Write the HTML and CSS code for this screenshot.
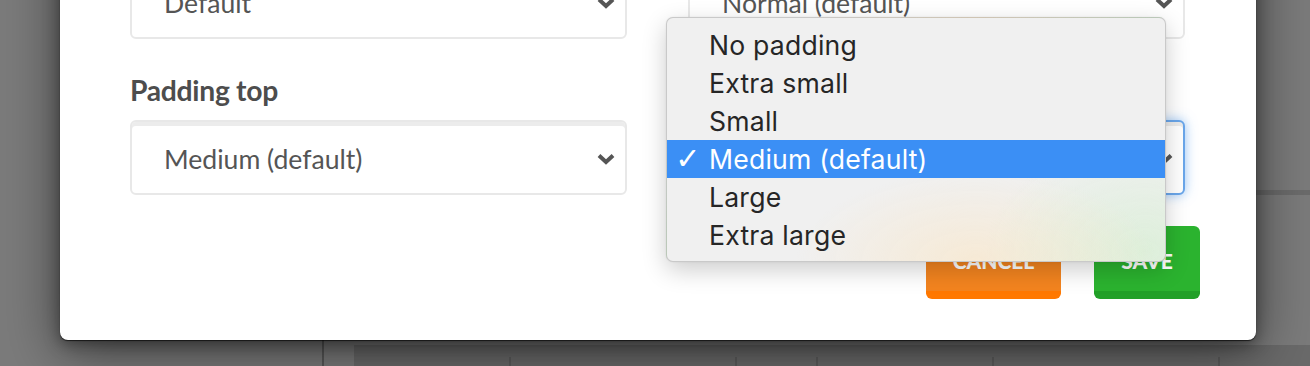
FILE: index.html
```html
<!DOCTYPE html>
<html lang="en">
<head>
<meta charset="utf-8">
<title>Padding settings</title>
<link rel="stylesheet" href="styles.css">
</head>
<body>
<div class="page">
  <div class="modal">
    <div class="form">
      <div class="col">
        <div class="select">
          <span class="value">Default</span>
          <svg class="chev" width="18" height="12" viewBox="0 0 18 12"><path d="M2 2.5 L9 9 L16 2.5" fill="none" stroke="#555" stroke-width="4" stroke-linecap="butt" stroke-linejoin="miter"/></svg>
        </div>
        <label class="label">Padding top</label>
        <div class="select">
          <span class="value">Medium (default)</span>
          <svg class="chev" width="18" height="12" viewBox="0 0 18 12"><path d="M2 2.5 L9 9 L16 2.5" fill="none" stroke="#555" stroke-width="4" stroke-linecap="butt" stroke-linejoin="miter"/></svg>
        </div>
      </div>
      <div class="col">
        <div class="select">
          <span class="value">Normal (default)</span>
          <svg class="chev" width="18" height="12" viewBox="0 0 18 12"><path d="M2 2.5 L9 9 L16 2.5" fill="none" stroke="#555" stroke-width="4" stroke-linecap="butt" stroke-linejoin="miter"/></svg>
        </div>
        <label class="label" aria-hidden="true"></label>
        <div class="select focus">
          <span class="value"></span>
          <svg class="chev" width="18" height="12" viewBox="0 0 18 12"><path d="M2 2.5 L9 9 L16 2.5" fill="none" stroke="#555" stroke-width="4" stroke-linecap="butt" stroke-linejoin="miter"/></svg>
        </div>
      </div>
    </div>
    <div class="actions">
      <button class="btn cancel">Cancel</button>
      <button class="btn save">Save</button>
    </div>
  </div>

  <ul class="menu">
    <li class="item"><span class="tick"></span>No padding</li>
    <li class="item"><span class="tick"></span>Extra small</li>
    <li class="item"><span class="tick"></span>Small</li>
    <li class="item active"><span class="tick">✓</span>Medium (default)</li>
    <li class="item"><span class="tick"></span>Large</li>
    <li class="item"><span class="tick"></span>Extra large</li>
  </ul>
</div>
</body>
</html>
```

FILE: styles.css
```css
html, body {
  margin: 0;
  padding: 0;
}

body {
  width: 1310px;
  height: 366px;
  overflow: hidden;
  font-family: Lato, "Open Sans", sans-serif;
}

.page {
  position: relative;
  width: 1310px;
  height: 366px;
  overflow: hidden;
  background-color: #7b7b7b;
  background-image:
    linear-gradient(#5c5c5c, #5c5c5c),
    linear-gradient(#5c5c5c, #5c5c5c),
    linear-gradient(#5c5c5c, #5c5c5c),
    linear-gradient(#5c5c5c, #5c5c5c),
    linear-gradient(#5c5c5c, #5c5c5c),
    linear-gradient(#585858, #585858),
    linear-gradient(#6a6a6a, #6a6a6a),
    linear-gradient(#6b6b6b, #6b6b6b);
  background-repeat: no-repeat;
  background-position:
    509px 357px,
    735px 357px,
    816px 357px,
    992px 357px,
    1218px 357px,
    322px 0,
    354px 345px,
    1256px 190px;
  background-size:
    2px 12px,
    2px 12px,
    2px 12px,
    2px 12px,
    2px 12px,
    2px 100%,
    100% 100%,
    100% 5px;
}

/* ---------- modal ---------- */
.modal {
  position: absolute;
  left: 60px;
  top: -100px;
  width: 1196px;
  box-sizing: border-box;
  padding: 64px 0 41px 0;
  background: #fff;
  border-radius: 8px;
  box-shadow:
    0 1px 1px rgba(0, 0, 0, 0.65),
    0 4px 16px rgba(0, 0, 0, 0.4),
    0 12px 56px rgba(0, 0, 0, 0.5);
}

.form {
  display: grid;
  grid-template-columns: 497px 497px;
  column-gap: 61px;
  padding: 0 71px 0 70px;
}

.col {
  display: flex;
  flex-direction: column;
}

.label {
  margin: 36px 0 15px 0;
  height: 30px;
  line-height: 30px;
  font-size: 28.3px;
  font-weight: 700;
  color: #4d4d4d;
  letter-spacing: -0.3px;
}

.select {
  height: 75px;
  box-sizing: border-box;
  display: flex;
  align-items: center;
  justify-content: space-between;
  padding: 0 10px 0 32px;
  border: 2px solid #e8e8e8;
  border-radius: 6px;
  box-shadow: inset 0 4px 0 #ececec;
  background: #fff;
}

.select.focus {
  border-color: #6aa6ea;
  box-shadow: inset 0 4px 0 #ececec, 0 0 12px rgba(70, 150, 240, 0.55);
}

.value {
  font-size: 26.6px;
  color: #555;
  padding-top: 2px;
}

.chev {
  display: block;
  margin-top: 2px;
}

/* ---------- buttons ---------- */
.actions {
  display: flex;
  justify-content: flex-end;
  gap: 33px;
  margin-top: 31px;
  padding-right: 56px;
}

.btn {
  height: 73px;
  box-sizing: border-box;
  border: none;
  border-radius: 6px;
  padding: 4px 0 0 0;
  font-family: Lato, sans-serif;
  font-weight: 900;
  font-size: 21px;
  color: #fff;
  text-transform: uppercase;
  letter-spacing: 0;
}

.cancel {
  width: 135px;
  background: #f3841f;
  border-bottom: 8px solid #ff7800;
}

.save {
  width: 106px;
  background: #2bb32f;
  border-bottom: 8px solid #22a028;
}

/* ---------- native-style dropdown menu ---------- */
.menu {
  position: absolute;
  left: 666px;
  top: 17px;
  width: 500px;
  height: 245px;
  box-sizing: border-box;
  margin: 0;
  padding: 8px 0 0 0;
  list-style: none;
  border-radius: 7px;
  border: 1px solid rgba(0, 0, 0, 0.16);
  background:
    radial-gradient(ellipse 180px 90px at 62% 100%, rgba(255, 226, 180, 0.45), rgba(255, 226, 180, 0)),
    radial-gradient(ellipse 160px 110px at 96% 96%, rgba(205, 238, 200, 0.55), rgba(205, 238, 200, 0)),
    #f0f0f0;
  box-shadow: 0 8px 24px rgba(0, 0, 0, 0.2), 0 0 2px rgba(0, 0, 0, 0.08);
  font-family: Inter, "Liberation Sans", sans-serif;
}

.item {
  display: flex;
  align-items: center;
  height: 38px;
  font-size: 26.6px;
  color: #262626;
  letter-spacing: 0.2px;
}

.item.active {
  background: #3b8ff5;
  color: #fff;
}

.tick {
  width: 42px;
  flex: none;
  text-align: center;
  font-family: "DejaVu Sans", sans-serif;
  font-size: 30px;
  line-height: 38px;
  padding-left: 0;
  box-sizing: border-box;
}
```
